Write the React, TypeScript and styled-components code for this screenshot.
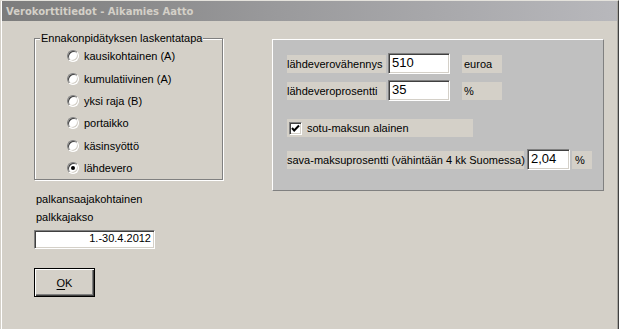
import React from "react";
import styled, { createGlobalStyle } from "styled-components";

const GlobalStyle = createGlobalStyle`
  html, body { margin: 0; padding: 0; background: #ffffff; }
  body { font-family: "Liberation Sans", Arial, sans-serif; font-size: 11px; color: #000; }
  * { box-sizing: border-box; }
`;

const Window = styled.div`
  width: 619px;
  height: 329px;
  background: #d4d0c8;
  border-top: 1px solid #e4e2dc;
  border-left: 1px solid #d4d0c8;
  border-right: 1px solid #404040;
  padding: 0 1px 0 1px;
  box-shadow: inset 1px 0 0 #ffffff, inset -1px 0 0 #a8a6a0;
  display: flex;
  flex-direction: column;
`;

const TitleBar = styled.div`
  height: 20px;
  flex: none;
  background: linear-gradient(to right, #7c7c7c 0%, #9a9a9c 45%, #b8b8bc 100%);
  display: flex;
  align-items: center;
  padding-left: 4px;
`;

const TitleText = styled.span`
  font-family: "DejaVu Sans", Verdana, sans-serif;
  font-weight: bold;
  font-size: 10px;
  color: #d4d0c8;
  white-space: nowrap;
`;

const Body = styled.div`
  flex: 1;
  display: flex;
  align-items: flex-start;
  padding: 11px 0 0 32px;
`;

const LeftColumn = styled.div`
  width: 189px;
  display: flex;
  flex-direction: column;
  align-items: flex-start;
`;

const GroupBox = styled.fieldset`
  width: 189px;
  margin: 0;
  padding: 0 0 0 5px;
  min-width: 0;
  border: 1px solid #808080;
  box-shadow: inset 1px 1px 0 #ffffff, 1px 1px 0 #ffffff;
`;

const Legend = styled.legend`
  padding: 0 1px;
  font-size: 11px;
  line-height: 13px;
  background: #d4d0c8;
  white-space: nowrap;
`;

const RadioList = styled.div`
  margin-left: 27px;
  display: flex;
  flex-direction: column;
`;

const RadioRow = styled.label`
  height: 22.4px;
  display: flex;
  align-items: center;
  gap: 5px;
  white-space: nowrap;
`;

const RadioCircle = styled.span<{ $checked?: boolean }>`
  width: 12px;
  height: 12px;
  flex: none;
  border-radius: 50%;
  background: #ffffff;
  border: 1px solid;
  border-color: #808080 #ffffff #ffffff #808080;
  box-shadow: inset 1px 1px 0 #404040, inset -1px -1px 0 #d4d0c8;
  display: flex;
  align-items: center;
  justify-content: center;
  &::after {
    content: "";
    width: 4px;
    height: 4px;
    border-radius: 50%;
    background: #000;
    display: ${(p) => (p.$checked ? "block" : "none")};
  }
`;

const PeriodLabel = styled.div`
  margin-top: 10px;
  padding-left: 2px;
  line-height: 18px;
`;

const PeriodInput = styled.div`
  margin-top: 4px;
  width: 121px;
  height: 19px;
  background: #ffffff;
  border: 1px solid;
  border-color: #808080 #ffffff #ffffff #808080;
  box-shadow: inset 1px 1px 0 #404040, inset -1px -1px 0 #d4d0c8;
  padding: 1px 3px 0 2px;
  text-align: right;
  line-height: 13px;
  font-size: 11px;
`;

const DefaultButton = styled.button`
  margin-top: 19px;
  width: 61px;
  height: 29px;
  background: #d4d0c8;
  border: 1px solid #000;
  box-shadow: inset 1px 1px 0 #ffffff, inset -1px -1px 0 #404040, inset -2px -2px 0 #808080;
  font-family: "Liberation Sans", Arial, sans-serif;
  font-size: 11px;
  color: #000;
  padding: 0;
  display: flex;
  align-items: center;
  justify-content: center;
  u { text-decoration: underline; text-underline-offset: 2px; }
`;

const RightPanel = styled.div`
  margin-left: 49px;
  margin-top: 7px;
  width: 332px;
  height: 152px;
  background: #c0c0c0;
  border: 1px solid;
  border-color: #ffffff #808080 #808080 #ffffff;
  padding: 13px 0 0 14px;
  display: flex;
  flex-direction: column;
  align-items: flex-start;
`;

const FieldRow = styled.div<{ $top: number }>`
  margin-top: ${(p) => p.$top}px;
  display: flex;
  align-items: center;
  height: 21px;
`;

const Strip = styled.span<{ $w: number; $ml?: number; $pl?: number }>`
  width: ${(p) => p.$w}px;
  margin-left: ${(p) => p.$ml ?? 0}px;
  padding-left: ${(p) => p.$pl ?? 0}px;
  height: 18px;
  background: #d4d0c8;
  display: flex;
  align-items: center;
  white-space: nowrap;
  font-size: 11px;
`;

const TextInput = styled.div<{ $w: number; $ml: number }>`
  width: ${(p) => p.$w}px;
  margin-left: ${(p) => p.$ml}px;
  height: 21px;
  background: #ffffff;
  border: 1px solid;
  border-color: #808080 #ffffff #ffffff #808080;
  box-shadow: inset 1px 1px 0 #404040, inset -1px -1px 0 #d4d0c8;
  padding: 1px 2px 0 3px;
  font-size: 13px;
  line-height: 15px;
`;

const CheckRow = styled.label`
  margin-top: 18px;
  width: 186px;
  height: 18px;
  background: #d4d0c8;
  display: flex;
  align-items: center;
  gap: 5px;
  padding-left: 2px;
  white-space: nowrap;
`;

const CheckBox = styled.span`
  width: 13px;
  height: 13px;
  flex: none;
  background: #ffffff;
  border: 1px solid;
  border-color: #808080 #ffffff #ffffff #808080;
  box-shadow: inset 1px 1px 0 #404040, inset -1px -1px 0 #d4d0c8;
  display: flex;
  align-items: center;
  justify-content: center;
  svg { display: block; }
`;

const options = [
  { label: "kausikohtainen (A)", checked: false },
  { label: "kumulatiivinen (A)", checked: false },
  { label: "yksi raja (B)", checked: false },
  { label: "portaikko", checked: false },
  { label: "käsinsyöttö", checked: false },
  { label: "lähdevero", checked: true },
];

export default function App() {
  return (
    <>
      <GlobalStyle />
      <Window>
        <TitleBar>
          <TitleText>Verokorttitiedot - Aikamies Aatto</TitleText>
        </TitleBar>
        <Body>
          <LeftColumn>
            <GroupBox>
              <Legend>Ennakonpidätyksen laskentatapa</Legend>
              <RadioList>
                {options.map((o) => (
                  <RadioRow key={o.label}>
                    <RadioCircle $checked={o.checked} />
                    <span>{o.label}</span>
                  </RadioRow>
                ))}
              </RadioList>
            </GroupBox>
            <PeriodLabel>
              palkansaajakohtainen
              <br />
              palkkajakso
            </PeriodLabel>
            <PeriodInput>1.-30.4.2012</PeriodInput>
            <DefaultButton>
              <u>O</u>K
            </DefaultButton>
          </LeftColumn>
          <RightPanel>
            <FieldRow $top={0}>
              <Strip $w={99}>lähdeverovähennys</Strip>
              <TextInput $w={62} $ml={2}>510</TextInput>
              <Strip $w={40} $ml={12} $pl={2}>euroa</Strip>
            </FieldRow>
            <FieldRow $top={6}>
              <Strip $w={99}>lähdeveroprosentti</Strip>
              <TextInput $w={62} $ml={2}>35</TextInput>
              <Strip $w={40} $ml={12} $pl={2}>%</Strip>
            </FieldRow>
            <CheckRow>
              <CheckBox>
                <svg width="9" height="9" viewBox="0 0 9 9">
                  <polyline points="1,4 3.2,6.5 8,1.5" fill="none" stroke="#000" strokeWidth="2" />
                </svg>
              </CheckBox>
              <span>sotu-maksun alainen</span>
            </CheckRow>
            <FieldRow $top={12}>
              <Strip $w={237}>sava-maksuprosentti (vähintään 4 kk Suomessa)</Strip>
              <TextInput $w={43} $ml={3}>2,04</TextInput>
              <Strip $w={20} $ml={2} $pl={3}>%</Strip>
            </FieldRow>
          </RightPanel>
        </Body>
      </Window>
    </>
  );
}
